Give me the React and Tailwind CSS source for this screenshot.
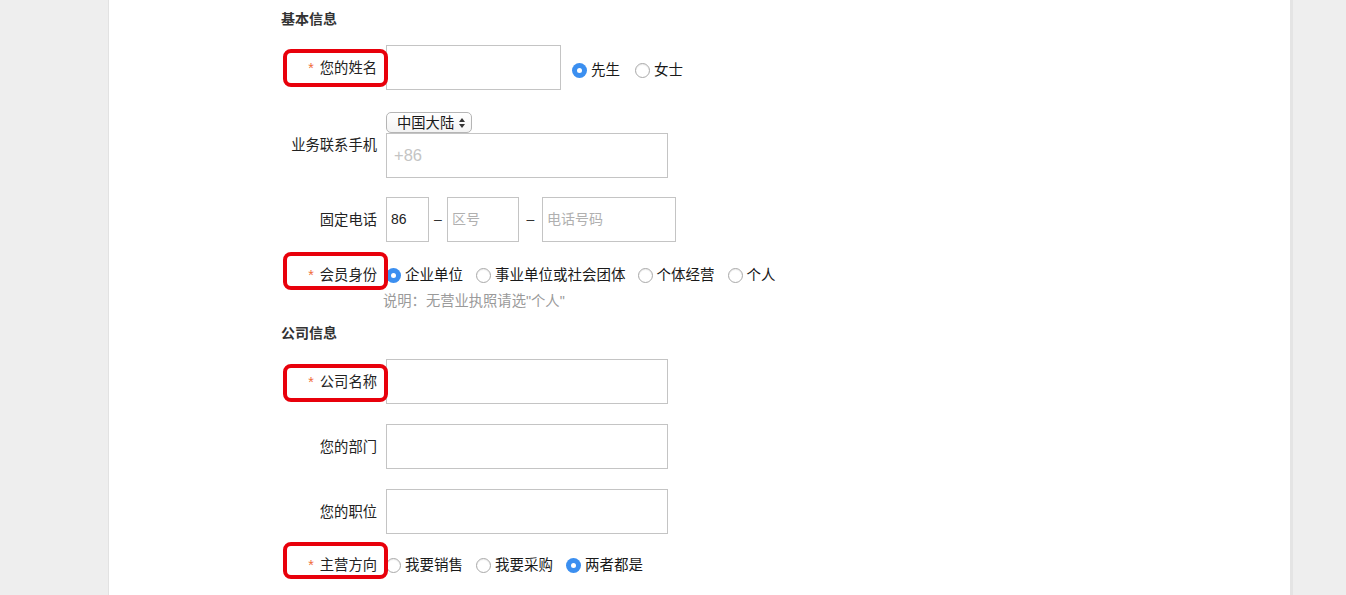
import React from "react";

const FONT = { fontFamily: '"Liberation Sans", "Noto Sans CJK SC", sans-serif' };

function Radio({ checked, label, className = "" }) {
  return (
    <span className={"flex items-center " + className}>
      {checked ? (
        <span className="flex h-[15px] w-[15px] items-center justify-center rounded-full bg-[#3b8ff0]">
          <span className="h-[5px] w-[5px] rounded-full bg-white" />
        </span>
      ) : (
        <span className="h-[15px] w-[15px] rounded-full border border-[#a9a9a9] bg-white shadow-[inset_0_1px_1px_rgba(0,0,0,0.08)]" />
      )}
      <span className="ml-[4px] text-[14.5px] leading-[20px] text-[#1a1a1a]">{label}</span>
    </span>
  );
}

function Label({ text, required, boxClass, height = "h-[45px]" }) {
  return (
    <div className={"relative flex w-[105px] shrink-0 items-center justify-end pr-[9px] " + height}>
      {boxClass && (
        <div className={"pointer-events-none absolute left-[2px] w-[105px] rounded-[8px] border-[4px] border-[#e8000b] " + boxClass} />
      )}
      <span className="relative text-[14.3px] leading-[20px] text-[#222]">
        {required && <span className="mr-[6px] text-[#f06a3a]">*</span>}
        {text}
      </span>
    </div>
  );
}

function Input({ w, value, placeholder, textClass = "" }) {
  return (
    <div className={"flex h-[45px] items-center border border-[#c4c4c4] bg-white pl-[4px] " + w}>
      {value && <span className={"text-[14px] text-[#222] " + textClass}>{value}</span>}
      {placeholder && <span className={"text-[14px] text-[#b0b0b0] " + textClass}>{placeholder}</span>}
    </div>
  );
}

export default function App() {
  return (
    <div className="flex h-[595px] w-[1346px] overflow-hidden bg-[#eeeeee]" style={FONT}>
      <div className="w-[109px] shrink-0 border-r border-[#e2e2e2] bg-[#eeeeee]" />
      <div className="flex-1 bg-white pl-[172px] pt-[9px]">
        <div className="h-[20px] text-[14px] font-bold leading-[20px] text-[#333]">基本信息</div>

        {/* name */}
        <div className="mt-[16px] flex items-center">
          <Label text="您的姓名" required boxClass="top-[4px] h-[38px]" />
          <Input w="w-[175px]" />
          <div className="ml-[11px] mt-[5px] flex items-center">
            <Radio checked label="先生" />
            <Radio label="女士" className="ml-[15px]" />
          </div>
        </div>

        {/* mobile */}
        <div className="mt-[22px] flex items-center">
          <Label text="业务联系手机" height="h-[66px]" />
          <div className="flex flex-col">
            <div className="flex h-[21px] w-[86px] items-center rounded-[5px] border border-[#b5b5b5] bg-gradient-to-b from-white to-[#f3f3f3] pl-[10px]">
              <span className="text-[14.3px] leading-[18px] text-[#1a1a1a]">中国大陆</span>
              <svg width="8" height="12" viewBox="0 0 8 12" className="ml-[4px]">
                <path d="M4 1 L7 5 H1 Z" fill="#333" />
                <path d="M4 11 L7 7 H1 Z" fill="#333" />
              </svg>
            </div>
            <div className="flex h-[45px] w-[282px] items-center border border-[#c4c4c4] bg-white pl-[7px]">
              <span className="text-[16.5px] text-[#c4c4c4]">+86</span>
            </div>
          </div>
        </div>

        {/* fixed phone */}
        <div className="mt-[19px] flex items-center">
          <Label text="固定电话" />
          <Input w="w-[43px]" value="86" />
          <span className="w-[18px] text-center text-[14px] text-[#333]">–</span>
          <Input w="w-[72px]" placeholder="区号" />
          <span className="w-[23px] text-center text-[14px] text-[#333]">–</span>
          <Input w="w-[134px]" placeholder="电话号码" />
        </div>

        {/* member */}
        <div className="mt-[19px] flex items-center">
          <Label text="会员身份" required height="h-[28px]" boxClass="top-[-9px] h-[38px]" />
          <div className="flex items-center">
            <Radio checked label="企业单位" />
            <Radio label="事业单位或社会团体" className="ml-[13px]" />
            <Radio label="个体经营" className="ml-[12px]" />
            <Radio label="个人" className="ml-[13px]" />
          </div>
        </div>
        <div className="ml-[102px] mt-[2px] h-[20px] text-[14.3px] leading-[20px] text-[#9a9a9a]">说明：无营业执照请选"个人"</div>

        <div className="mt-[12px] h-[20px] text-[14px] font-bold leading-[20px] text-[#333]">公司信息</div>

        <div className="mt-[16px] flex items-center">
          <Label text="公司名称" required boxClass="top-[5px] h-[38px]" />
          <Input w="w-[282px]" />
        </div>
        <div className="mt-[20px] flex items-center">
          <Label text="您的部门" />
          <Input w="w-[282px]" />
        </div>
        <div className="mt-[20px] flex items-center">
          <Label text="您的职位" />
          <Input w="w-[282px]" />
        </div>

        <div className="mt-[17px] flex items-center">
          <Label text="主营方向" required height="h-[28px]" boxClass="top-[-9px] h-[37px]" />
          <div className="flex items-center">
            <Radio label="我要销售" />
            <Radio label="我要采购" className="ml-[13px]" />
            <Radio checked label="两者都是" className="ml-[13px]" />
          </div>
        </div>
      </div>
      <div className="w-[56px] shrink-0 border-l-[3px] border-[#e4e4e4] bg-[#eeeeee]" />
    </div>
  );
}
